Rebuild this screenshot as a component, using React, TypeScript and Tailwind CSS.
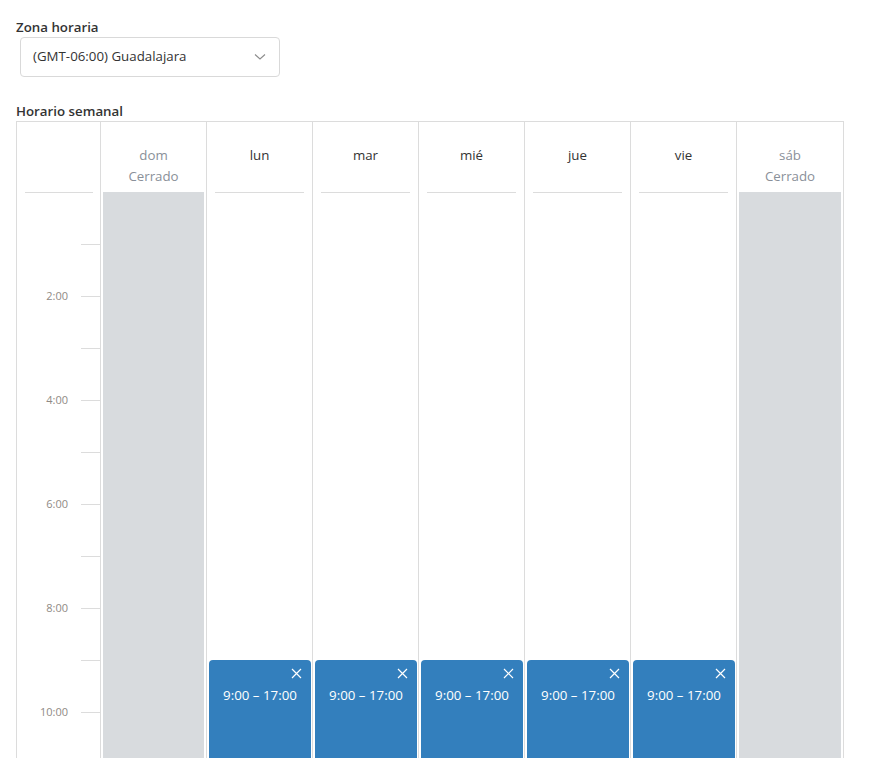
export default function App() {
  const days = [
    { name: "dom", closed: true },
    { name: "lun", closed: false },
    { name: "mar", closed: false },
    { name: "mié", closed: false },
    { name: "jue", closed: false },
    { name: "vie", closed: false },
    { name: "sáb", closed: true },
  ]
  // only the hours that fit on screen
  const hours = Array.from({ length: 12 }, (_, i) => i)

  return (
    <div
      className="h-screen overflow-hidden bg-white text-[13.3px] text-[#333]"
      style={{ fontFamily: '"Open Sans", "Noto Sans", sans-serif' }}
    >
      <div className="pl-4 pt-[18px]">
        <div className="h-[19px] leading-[19px] font-semibold">Zona horaria</div>
        <div className="ml-1 flex h-[40px] w-[260px] items-center justify-between rounded-[4px] border border-[#d9d9d9] pl-3 pr-[13px]">
          <span>(GMT-06:00) Guadalajara</span>
          <svg width="12" height="8" viewBox="0 0 12 8" fill="none">
            <path d="M1 1.5 L6 6 L11 1.5" stroke="#8c8c8c" strokeWidth="1.1" />
          </svg>
        </div>

        <div className="mt-[25px] h-[19px] leading-[19px] font-semibold">Horario semanal</div>

        <div className="flex w-[828px] border border-[#dcdcdc]">
          {/* time column */}
          <div className="w-[83px] shrink-0">
            <div className="h-[70px]" />
            {hours.map((h) => (
              <div key={h} className="flex h-[52px] items-start justify-end">
                {h === 0 ? (
                  <div className="ml-2 mr-[7px] h-px flex-1 bg-[#dcdcdc]" />
                ) : (
                  <>
                    {h % 2 === 0 && (
                      <span className="mr-[13px] -mt-[8px] text-[11px] leading-[16px] text-[#8f8a85]">
                        {h}:00
                      </span>
                    )}
                    <div className="h-px w-[19px] bg-[#dcdcdc]" />
                  </>
                )}
              </div>
            ))}
          </div>

          {/* day columns */}
          {days.map((d, i) => (
            <div
              key={d.name}
              className={`${i === 6 ? "w-[107px]" : "w-[106px]"} shrink-0 border-l border-[#dcdcdc]`}
            >
              <div
                className={`h-[70px] pt-[23px] text-center leading-[21px] ${
                  d.closed ? "text-[#8a9099]" : "text-[#333]"
                }`}
              >
                <div>{d.name}</div>
                {d.closed && <div>Cerrado</div>}
              </div>
              {d.closed ? (
                <div className="mx-[2px] h-[624px] bg-[#d8dbde]" />
              ) : (
                <div className="h-[624px]">
                  <div className="mx-2 h-px bg-[#dcdcdc]" />
                  <div className="h-[467px]" />
                  <div className="ml-[2px] mr-px h-[156px] rounded-t-[4px] bg-[#337fbd] px-2 pt-[4px] text-white">
                    <div className="flex h-[20px] justify-end">
                      <svg width="11" height="11" viewBox="0 0 11 11" className="mt-[4px] mr-[1px]">
                        <path d="M1 1 L10 10 M10 1 L1 10" stroke="white" strokeWidth="1.2" />
                      </svg>
                    </div>
                    <div className="text-center leading-[22px]">9:00 – 17:00</div>
                  </div>
                </div>
              )}
            </div>
          ))}
        </div>
      </div>
    </div>
  )
}
